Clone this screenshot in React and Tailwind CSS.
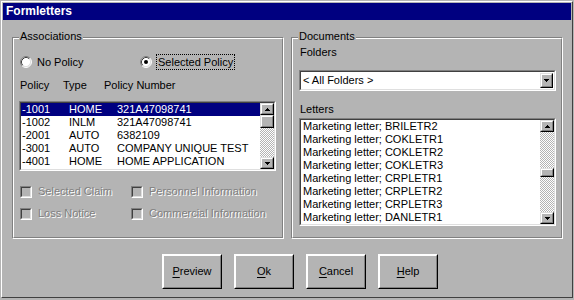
import React from 'react';

const policies = [
  ['-1001', 'HOME', '321A47098741'],
  ['-1002', 'INLM', '321A47098741'],
  ['-2001', 'AUTO', '6382109'],
  ['-3001', 'AUTO', 'COMPANY UNIQUE TEST'],
  ['-4001', 'HOME', 'HOME APPLICATION'],
];

const letters = ['BRILETR2', 'COKLETR1', 'COKLETR2', 'COKLETR3', 'CRPLETR1', 'CRPLETR2', 'CRPLETR3', 'DANLETR1'];

function Sunken({ className = '', inner = '', children }) {
  return (
    <div className={`border border-t-[#808080] border-l-[#808080] border-r-white border-b-white ${className}`}>
      <div className={`h-full w-full border border-t-[#404040] border-l-[#404040] border-r-[#dfdfdf] border-b-[#dfdfdf] ${inner}`}>
        {children}
      </div>
    </div>
  );
}

function Raised({ className = '', style, children }) {
  return (
    <div style={style} className={`border border-t-[#dfdfdf] border-l-[#dfdfdf] border-r-black border-b-black ${className}`}>
      <div className="flex h-full w-full items-center justify-center border border-t-white border-l-white border-r-[#808080] border-b-[#808080] bg-[#b4b4b4]">
        {children}
      </div>
    </div>
  );
}

function Arrow({ down }) {
  return (
    <svg width="5" height="3" viewBox="0 0 5 3" shapeRendering="crispEdges">
      {down ? (
        <>
          <rect x="0" y="0" width="5" height="1" fill="#000" />
          <rect x="1" y="1" width="3" height="1" fill="#000" />
          <rect x="2" y="2" width="1" height="1" fill="#000" />
        </>
      ) : (
        <>
          <rect x="2" y="0" width="1" height="1" fill="#000" />
          <rect x="1" y="1" width="3" height="1" fill="#000" />
          <rect x="0" y="2" width="5" height="1" fill="#000" />
        </>
      )}
    </svg>
  );
}

function ScrollBar({ thumbTop, thumbH }) {
  return (
    <div className="flex h-full w-[14px] flex-col">
      <Raised className="h-[12px] w-full shrink-0">
        <Arrow />
      </Raised>
      <div className="relative flex-1 bg-[repeating-conic-gradient(#ffffff_0%_25%,#b4b4b4_0%_50%)] bg-[length:2px_2px]">
        <Raised className="absolute left-0 w-full" style={{ top: thumbTop, height: thumbH }} />
      </div>
      <Raised className="h-[12px] w-full shrink-0">
        <Arrow down />
      </Raised>
    </div>
  );
}

function Group({ label, className = '', children }) {
  return (
    <div className={`relative border border-t-[#808080] border-l-[#808080] border-r-white border-b-white ${className}`}>
      <div className="h-full border border-t-white border-l-white border-r-[#808080] border-b-[#808080]">{children}</div>
      <span className="absolute left-[6px] top-[-8px] bg-[#b4b4b4] px-px leading-[13px]">{label}</span>
    </div>
  );
}

function Radio({ checked }) {
  return (
    <svg width="12" height="12" viewBox="0 0 12 12" className="shrink-0">
      <circle cx="6" cy="6" r="5" fill="#fff" />
      <path d="M2.11 9.89 A5.5 5.5 0 0 1 9.89 2.11" fill="none" stroke="#808080" strokeWidth="1" />
      <path d="M9.89 2.11 A5.5 5.5 0 0 1 2.11 9.89" fill="none" stroke="#fff" strokeWidth="1" />
      <path d="M2.82 9.18 A4.5 4.5 0 0 1 9.18 2.82" fill="none" stroke="#404040" strokeWidth="1" />
      <path d="M9.18 2.82 A4.5 4.5 0 0 1 2.82 9.18" fill="none" stroke="#dfdfdf" strokeWidth="1" />
      {checked && <circle cx="6" cy="6" r="2" fill="#000" />}
    </svg>
  );
}

function Check({ label, className = '' }) {
  return (
    <div className={`flex h-[13px] items-center gap-[6px] ${className}`}>
      <Sunken className="h-[12px] w-[12px] shrink-0" inner="bg-[#b4b4b4]" />
      <span className="text-[#808080] [text-shadow:1px_1px_0_#fff]">{label}</span>
    </div>
  );
}

function Button({ label, mnemonic }) {
  return (
    <Raised className="h-[35px] w-[60px] border-t-white border-l-white">
      <span>
        <span className="underline underline-offset-2">{mnemonic}</span>
        {label}
      </span>
    </Raised>
  );
}

export default function App() {
  return (
    <div className="h-[300px] w-[574px] bg-[#b4b4b4] pl-px pt-px text-[11px] leading-[13px] text-black font-['Liberation_Sans',Arial,sans-serif]">
      <div className="h-[297px] w-[572px] border border-t-white border-l-white border-r-[#404040] border-b-[#404040] p-px">
        {/* title bar */}
        <div className="flex h-[17px] items-center bg-[#000080] pl-[3px] text-[12px] font-bold text-white">Formletters</div>

        <div className="ml-[9px] mt-[17px] flex">
          <Group label="Associations" className="h-[202px] w-[272px]">
            <div className="pl-[6px] pt-[15px]">
              <div className="flex h-[16px] items-center">
                <div className="flex w-[120px] items-center gap-[5px]">
                  <Radio />
                  <span>No Policy</span>
                </div>
                <div className="flex items-center gap-[4px]">
                  <Radio checked />
                  <span className="border border-dotted border-black px-px leading-[14px]">Selected Policy</span>
                </div>
              </div>

              <div className="mt-[9px] flex h-[13px] items-center">
                <span className="w-[43px]">Policy</span>
                <span className="w-[41px]">Type</span>
                <span>Policy Number</span>
              </div>

              <Sunken className="-ml-px mt-[9px] h-[70px] w-[257px]" inner="flex bg-white">
                <div className="flex-1">
                  {policies.map((p, i) => (
                    <div
                      key={p[0]}
                      className={`flex h-[13px] items-center pl-px ${i === 0 ? 'bg-[#000080] text-white' : ''}`}
                    >
                      <span className="w-[47px]">{p[0]}</span>
                      <span className="w-[48px]">{p[1]}</span>
                      <span>{p[2]}</span>
                    </div>
                  ))}
                </div>
                <ScrollBar thumbTop={0} thumbH={13} />
              </Sunken>

              <div className="mt-[14px] flex">
                <Check label="Selected Claim" className="w-[111px]" />
                <Check label="Personnel Information" />
              </div>
              <div className="mt-[9px] flex">
                <Check label="Loss Notice" className="w-[111px]" />
                <Check label="Commercial Information" />
              </div>
            </div>
          </Group>

          <Group label="Documents" className="ml-[7px] h-[202px] w-[272px]">
            <div className="pl-[6px] pt-[7px]">
              <div className="flex h-[13px] items-center pl-px">Folders</div>
              <Sunken className="mt-[11px] h-[21px] w-[257px]" inner="flex items-center bg-white p-px">
                <span className="flex-1 pl-[1px]">&lt; All Folders &gt;</span>
                <Raised className="h-full w-[13px]">
                  <Arrow down />
                </Raised>
              </Sunken>
              <div className="mt-[12px] flex h-[13px] items-center pl-px">Letters</div>
              <Sunken className="mt-[2px] h-[108px] w-[257px]" inner="flex bg-white">
                <div className="flex-1 pl-[2px]">
                  {letters.map((l) => (
                    <div key={l} className="flex h-[13px] items-center">
                      Marketing letter; {l}
                    </div>
                  ))}
                </div>
                <ScrollBar thumbTop={36} thumbH={9} />
              </Sunken>
            </div>
          </Group>
        </div>

        <div className="ml-[159px] mt-[15px] flex gap-[12px]">
          <Button mnemonic="P" label="review" />
          <Button mnemonic="O" label="k" />
          <Button mnemonic="C" label="ancel" />
          <Button mnemonic="H" label="elp" />
        </div>
      </div>
    </div>
  );
}
